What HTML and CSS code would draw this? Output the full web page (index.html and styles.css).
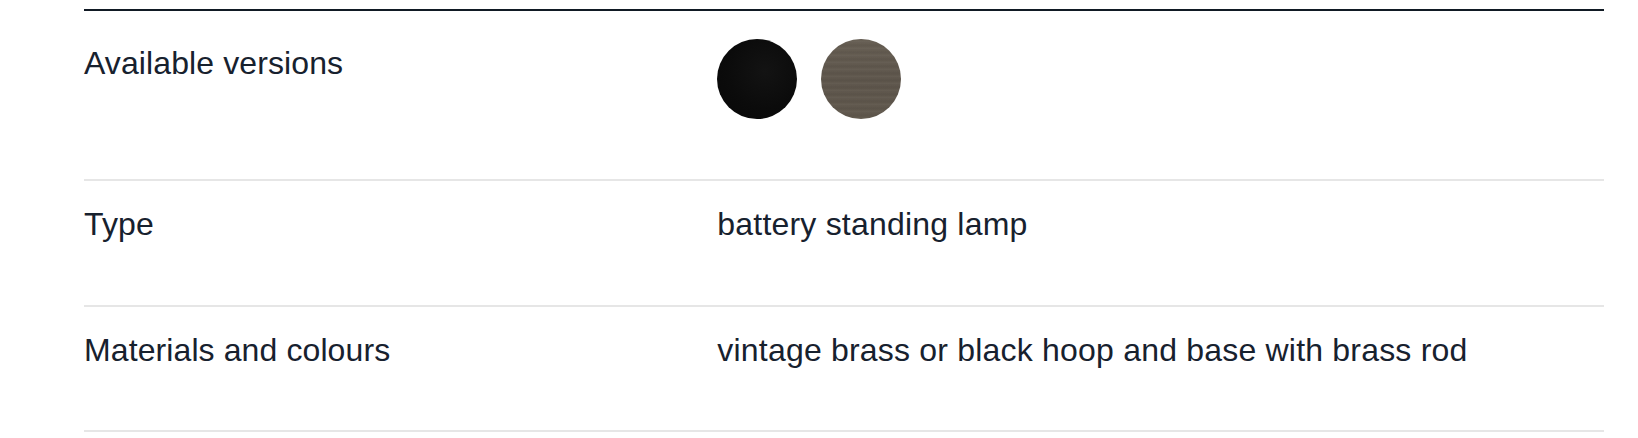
FILE: index.html
```html
<!DOCTYPE html>
<html lang="en">
<head>
<meta charset="utf-8">
<title>Specifications</title>
<link rel="stylesheet" href="styles.css">
</head>
<body>
  <section class="specs">
    <div class="spec-row spec-row--first">
      <div class="spec-label">Available versions</div>
      <div class="spec-value">
        <div class="swatches">
          <span class="swatch swatch--black" title="black"></span>
          <span class="swatch swatch--brass" title="vintage brass"></span>
        </div>
      </div>
    </div>
    <div class="spec-row">
      <div class="spec-label">Type</div>
      <div class="spec-value">battery standing lamp</div>
    </div>
    <div class="spec-row">
      <div class="spec-label">Materials and colours</div>
      <div class="spec-value">vintage brass or black hoop and base with brass rod</div>
    </div>
  </section>
</body>
</html>
```
FILE: styles.css
```css
html, body {
  margin: 0;
  padding: 0;
  background: #ffffff;
}

body {
  font-family: "Liberation Sans", Arial, Helvetica, sans-serif;
  color: #17212e;
  padding: 9px 34px 0 84px;
}

.specs {
  border-top: 2px solid #111a24;
}

.spec-row {
  display: grid;
  grid-template-columns: 5fr 7fr;
  padding: 19px 0 56.5px;
  border-bottom: 2px solid #e6e6e6;
  font-size: 32px;
  line-height: 48px;
}

.spec-row--first {
  padding-top: 28px;
  padding-bottom: 60px;
}

.spec-label,
.spec-value {
  min-width: 0;
}

.spec-label {
  letter-spacing: 0.1px;
}

.spec-value {
  letter-spacing: 0.2px;
}

.swatches {
  display: flex;
  gap: 24px;
}

.swatch {
  display: block;
  width: 80px;
  height: 80px;
  border-radius: 50%;
}

.swatch--black {
  background: radial-gradient(circle at 60% 40%, #131313 0%, #0b0b0b 55%, #070707 100%);
}

.swatch--brass {
  background-color: #5f574c;
  background-image:
    repeating-linear-gradient(0deg, rgba(255,255,255,0.035) 0px, rgba(255,255,255,0.035) 1px, rgba(0,0,0,0) 2px, rgba(0,0,0,0.04) 4px, rgba(0,0,0,0) 5px, rgba(255,255,255,0.02) 7px),
    linear-gradient(180deg, #655d52 0%, #5d554b 50%, #5f574c 100%);
}
```
